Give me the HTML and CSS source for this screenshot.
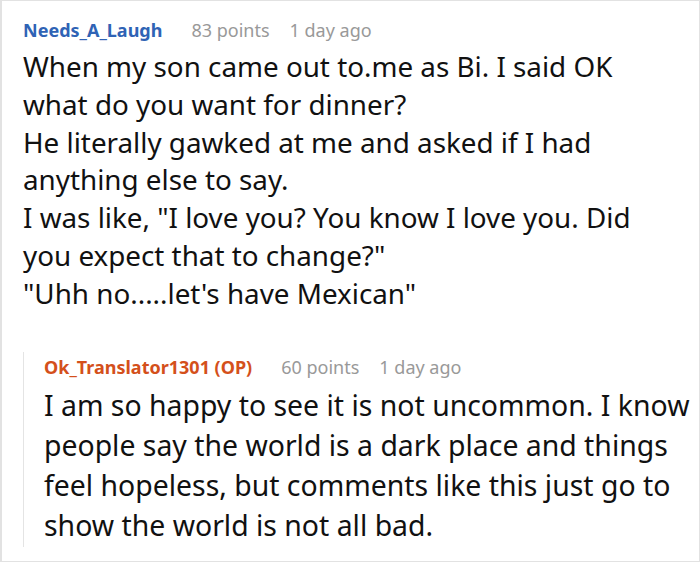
FILE: index.html
```html
<!DOCTYPE html>
<html>
<head>
<meta charset="utf-8">
<link rel="stylesheet" href="styles.css">
</head>
<body>
<div class="thread">
  <div class="comment">
    <div class="meta">
      <span class="author">Needs_A_Laugh</span>
      <span class="points">83 points</span>
      <span class="time">1 day ago</span>
    </div>
    <div class="body main-body">
      <p>When my son came out to.me as Bi. I said OK what do you want for dinner?</p>
      <p>He literally gawked at me and asked if I had anything else to say.</p>
      <p>I was like, "I love you? You know I love you. Did you expect that to change?"</p>
      <p>"Uhh no.....let's have Mexican"</p>
    </div>
  </div>
  <div class="reply">
    <div class="meta reply-meta">
      <span class="author op">Ok_Translator1301 (OP)</span>
      <span class="points">60 points</span>
      <span class="time">1 day ago</span>
    </div>
    <div class="body reply-body">
      <p>I am so happy to see it is not uncommon. I know people say the world is a dark place and things feel hopeless, but comments like this just go to show the world is not all bad.</p>
    </div>
  </div>
</div>
</body>
</html>
```

FILE: styles.css
```css
html, body {
  margin: 0;
  padding: 0;
  background: #fff;
}
.thread {
  width: 700px;
  height: 562px;
  box-sizing: border-box;
  border: 1px solid #e2e2e2;
  border-left-width: 2px;
  padding: 14px 1px 0 21px;
  font-family: "Noto Sans", sans-serif;
  color: #111;
  overflow: hidden;
}
.meta {
  display: flex;
  align-items: baseline;
  font-size: 18px;
  line-height: 30px;
}
.author {
  font-weight: 700;
  color: #2f63b5;
}
.author.op {
  color: #d4501b;
}
.points {
  color: #999;
  margin-left: 29px;
}
.time {
  color: #999;
  margin-left: 20px;
}
.body p {
  margin: 0;
}
.main-body {
  font-size: 27.8px;
  line-height: 37.8px;
  margin-top: 3px;
  width: 632px;
}
.reply {
  margin-top: 54px;
  border-left: 1px solid #e4e4e4;
  padding-left: 20px;
  padding-bottom: 2px;
}
.reply-meta {
  margin-top: -15px;
}
.reply-body {
  font-size: 28.4px;
  line-height: 40px;
  margin-top: 3px;
}
```
